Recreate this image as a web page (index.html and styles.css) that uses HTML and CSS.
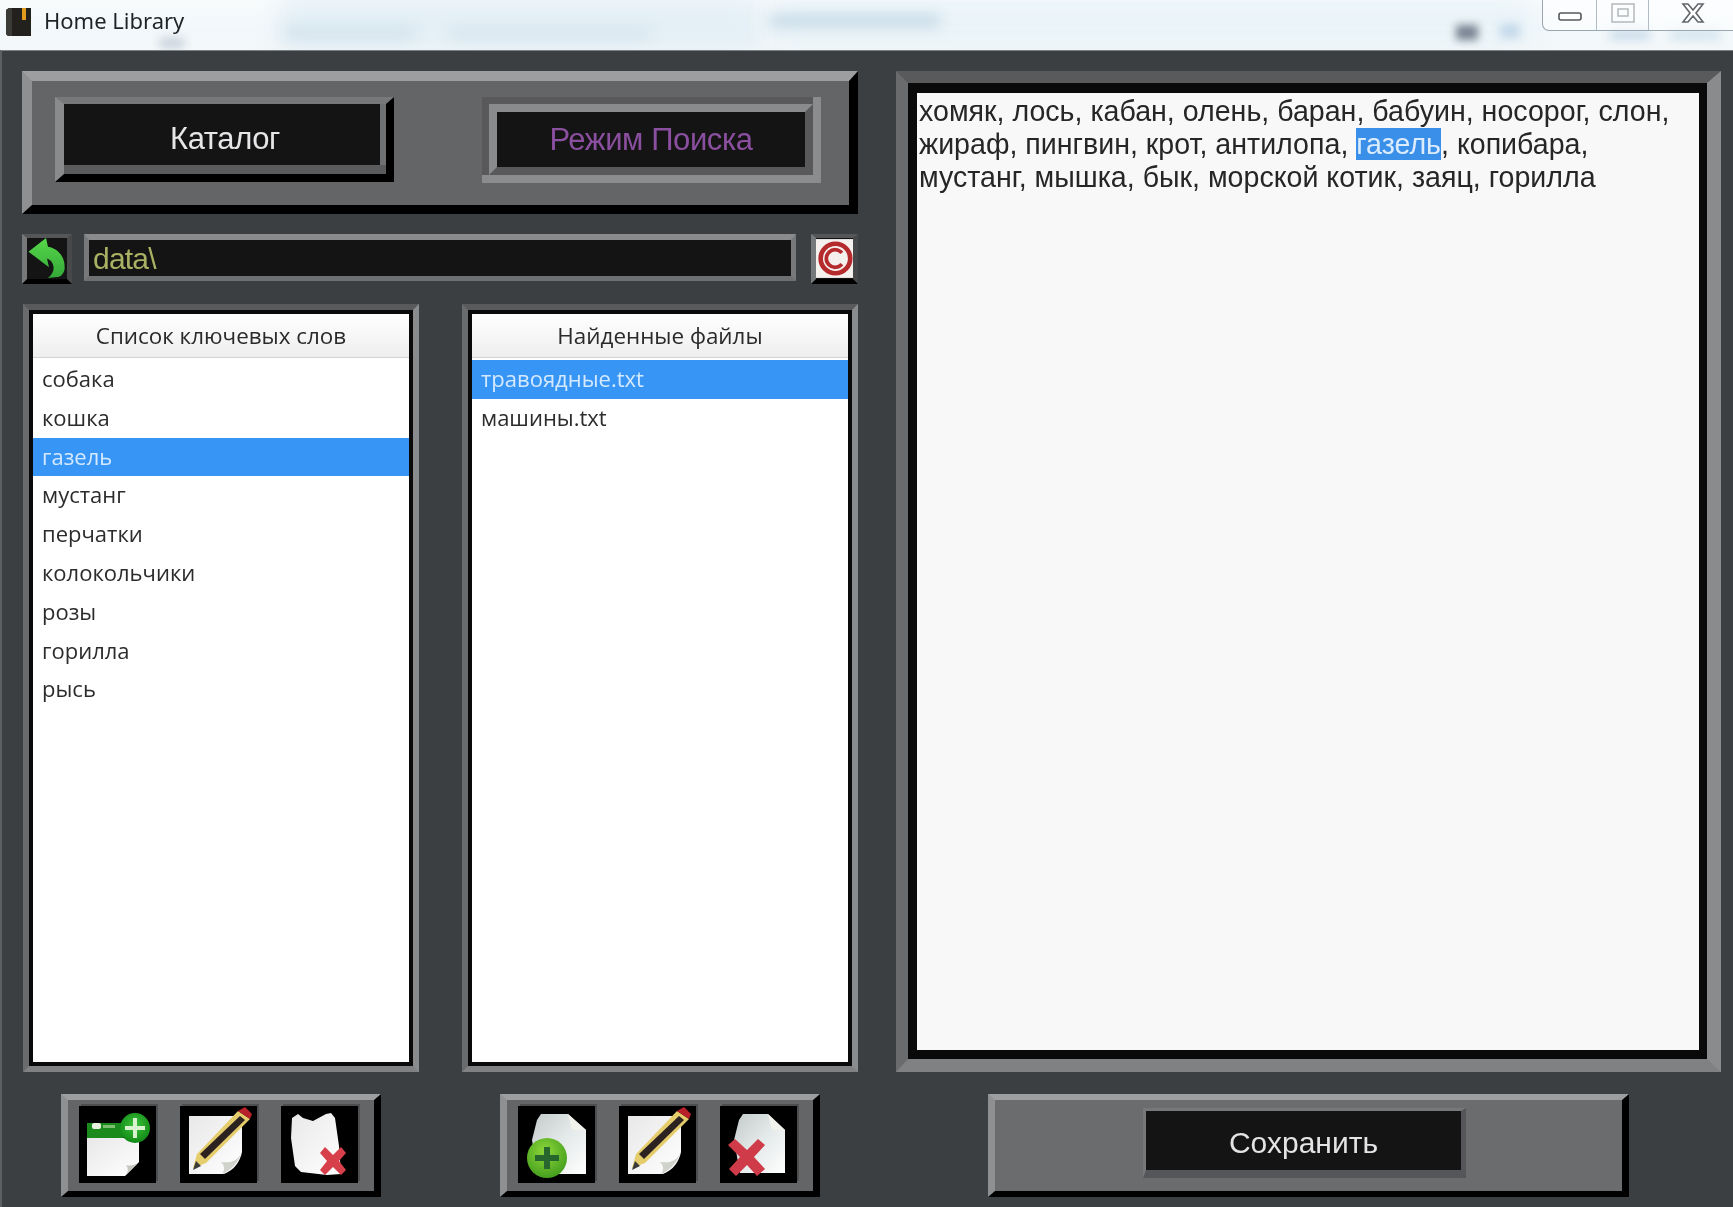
FILE: index.html
```html
<!DOCTYPE html>
<html lang="ru">
<head>
<meta charset="utf-8">
<title>Home Library</title>
<link rel="stylesheet" href="styles.css">
</head>
<body>
<svg class="defs" width="0" height="0" aria-hidden="true">
  <defs>
    <linearGradient id="sheet" x1="0" y1="0" x2="1" y2="1"><stop offset="0" stop-color="#e8e8e8"/><stop offset="1" stop-color="#ffffff"/></linearGradient>
    <linearGradient id="fileg" x1="0" y1="0" x2="1" y2="1"><stop offset="0" stop-color="#c4c9c9"/><stop offset=".5" stop-color="#e4e9e9"/><stop offset="1" stop-color="#ffffff"/></linearGradient>
    <radialGradient id="greenb" cx=".45" cy=".35" r=".7"><stop offset="0" stop-color="#8fd83a"/><stop offset="1" stop-color="#3f9a1c"/></radialGradient>
    <radialGradient id="greenc" cx=".5" cy=".4" r=".7"><stop offset="0" stop-color="#3cc23c"/><stop offset="1" stop-color="#0a800f"/></radialGradient>
    <linearGradient id="arrowg" x1="0" y1="0" x2="0" y2="1"><stop offset="0" stop-color="#57d84a"/><stop offset="1" stop-color="#34a838"/></linearGradient>
    <symbol id="pencil" viewBox="0 0 77 77">
      <path d="M9 10H62V46C60 56 54 64 44 68H9Z" fill="url(#sheet)"/>
      <path d="M61 48C56 56 50 57 41 56C45 60 45 64 42 68C52 64 58 56 61 48Z" fill="#cfd3cb"/>
      <path d="M58 5L70 13L26 57L13 62L17 48Z" fill="#e6cd6c"/>
      <path d="M60 10L65 14L25 53L20 48Z" fill="#2c2320"/>
      <path d="M58 5L65 1L72 8L70 13Z" fill="#b8202a"/>
      <path d="M16 55L21 60L13 64Z" fill="#3a3a3a"/>
    </symbol>
  </defs>
</svg>
<div class="app">
  <header class="titlebar">
    <div class="haze">
      <span class="blot blot-i"></span>
      <span class="blot blot-j"></span>
      <span class="blot blot-a"></span>
      <span class="blot blot-b"></span>
      <span class="blot blot-c"></span>
      <span class="blot blot-d"></span>
      <span class="blot blot-e"></span>
      <span class="blot blot-f"></span>
      <span class="blot blot-g"></span>
      <span class="blot blot-h"></span>
    </div>
    <svg class="app-icon" viewBox="0 0 27 30" aria-hidden="true">
      <path d="M1 3L4 1H26V29H3L1 27Z" fill="#23211e"/>
      <path d="M1 3L4 1H7V29H3L1 27Z" fill="#3a3a36"/>
      <rect x="17" y="1" width="4" height="12" fill="#e29a1c"/>
    </svg>
    <span class="app-name">Home Library</span>
    <div class="win-controls">
      <span class="win-btn win-min"><svg viewBox="0 0 24 10" aria-hidden="true"><rect x="1" y="1" width="22" height="7" rx="2" fill="#fff" stroke="#55595e" stroke-width="1.6"/></svg></span>
      <span class="win-btn win-max"><svg viewBox="0 0 24 20" aria-hidden="true"><rect x="1" y="1" width="22" height="18" fill="none" stroke="#b4b8bb" stroke-width="1.5"/><rect x="7" y="6" width="10" height="7" fill="none" stroke="#b4b8bb" stroke-width="1.5"/></svg></span>
      <span class="win-btn win-close"><svg viewBox="0 0 24 20" aria-hidden="true"><path d="M2 1H7L12 7L17 1H22L15 10L22 19H17L12 13L7 19H2L9 10Z" fill="#fff" stroke="#62666a" stroke-width="1.6"/></svg></span>
    </div>
  </header>

  <main class="main">
    <section class="left">
      <div class="bevel-out top-panel">
        <button class="btn-raised mode-btn">Каталог</button>
        <div class="btn-pressed-wrap"><button class="btn-pressed mode-btn">Режим Поиска</button></div>
      </div>

      <div class="path-row">
        <span class="small-btn back-btn">
          <svg viewBox="0 0 40 42" aria-hidden="true">
            <path d="M1 14L19 0L21 9C32 11 39 20 38 32C37 37 34 40 30 40L21 41C26 37 28 32 26 27C25 24 23 22 20 21L22 30Z" fill="url(#arrowg)"/>
          </svg>
        </span>
        <div class="path-field">data\</div>
        <span class="small-btn copy-btn">
          <svg viewBox="0 0 40 42" aria-hidden="true">
            <rect width="40" height="42" fill="#f4f0ee"/>
            <circle cx="21" cy="21" r="16" fill="none" stroke="#b52a2c" stroke-width="5"/>
            <path d="M28 15A9.5 9.5 0 1 0 28 27" fill="none" stroke="#b52a2c" stroke-width="4"/>
          </svg>
        </span>
      </div>

      <div class="lists">
        <div class="bevel-in list-box">
          <div class="list-head">Список ключевых слов</div>
          <ul class="list">
            <li>собака</li>
            <li>кошка</li>
            <li class="selected">газель</li>
            <li>мустанг</li>
            <li>перчатки</li>
            <li>колокольчики</li>
            <li>розы</li>
            <li>горилла</li>
            <li>рысь</li>
          </ul>
        </div>
        <div class="bevel-in list-box">
          <div class="list-head">Найденные файлы</div>
          <ul class="list">
            <li class="selected">травоядные.txt</li>
            <li>машины.txt</li>
          </ul>
        </div>
      </div>
    </section>

    <section class="bevel-in editor-box">
      <div class="editor">хомяк, лось, кабан, олень, баран, бабуин, носорог, слон, жираф, пингвин, крот, антилопа, <mark class="hit">газель</mark>, копибара, мустанг, мышка, бык, морской котик, заяц, горилла</div>
    </section>

    <section class="tools-row">
      <div class="bevel-out toolbar">
        <span class="icon-btn">
          <svg viewBox="0 0 77 77" aria-hidden="true">
            <path d="M8 32H60V56L46 70H8Z" fill="url(#sheet)"/>
            <path d="M60 56C55 60 51 60 47 59C50 63 49 67 46 70Z" fill="#c4c8c0"/>
            <path d="M8 17H44V32H8Z" fill="#1a8a1c"/>
            <rect x="13" y="17" width="9" height="6" rx="2" fill="#e8f0e0"/>
            <rect x="24" y="19" width="12" height="3" fill="#7dbf70"/>
            <circle cx="56" cy="22" r="15" fill="url(#greenc)"/>
            <path d="M54 12H58V20H66V24H58V32H54V24H46V20H54Z" fill="#d8f2d0"/>
          </svg>
        </span>
        <span class="icon-btn"><svg viewBox="0 0 77 77" aria-hidden="true"><use href="#pencil"/></svg></span>
        <span class="icon-btn">
          <svg viewBox="0 0 77 77" aria-hidden="true">
            <path d="M11 12L17 8L22 12L32 15L45 8L50 7L54 12L58 40L60 68L46 69L20 66L14 60L10 32Z" fill="url(#sheet)"/>
            <path d="M39 47L44 41L52 49L60 41L65 47L58 55L65 64L60 69L52 61L44 69L39 64L46 55Z" fill="#d7404a"/>
          </svg>
        </span>
      </div>

      <div class="bevel-out toolbar">
        <span class="icon-btn">
          <svg viewBox="0 0 77 77" aria-hidden="true">
            <path d="M19 14L23 8H50L68 24V68H20L14 34Z" fill="url(#fileg)"/>
            <path d="M50 8L68 24H54Z" fill="#f2f2ec"/>
            <circle cx="29" cy="52" r="20" fill="url(#greenb)"/>
            <path d="M26 41H32V49H41V55H32V63H26V55H17V49H26Z" fill="#27662c"/>
          </svg>
        </span>
        <span class="icon-btn"><svg viewBox="0 0 77 77" aria-hidden="true"><use href="#pencil"/></svg></span>
        <span class="icon-btn">
          <svg viewBox="0 0 77 77" aria-hidden="true">
            <path d="M19 14L23 8H48L65 24V67H20L14 34Z" fill="url(#fileg)"/>
            <path d="M48 8L65 24H52Z" fill="#f2f2ec"/>
            <path d="M8 39L15 33L27 44L38 33L45 39L34 51L45 63L37 70L27 59L16 70L9 63L20 51Z" fill="#cf3b48"/>
          </svg>
        </span>
      </div>
    </section>

    <section class="bevel-out save-panel">
      <button class="btn-save">Сохранить</button>
    </section>
  </main>
</div>
</body>
</html>
```

FILE: styles.css
```css
* { box-sizing: border-box; }
html, body { margin: 0; padding: 0; background: #3c3f41; }
.defs { position: absolute; }

.app {
  width: 1733px;
  height: 1207px;
  display: flex;
  flex-direction: column;
  overflow: hidden;
  font-family: "Liberation Sans", Arial, sans-serif;
  filter: blur(0.5px);
}

/* Title bar */
.titlebar {
  position: relative;
  height: 50px;
  flex: none;
  display: flex;
  align-items: flex-start;
  overflow: hidden;
  background: linear-gradient(180deg, #f8fbfc 0%, #f1f8fb 60%, #f4f7f8 100%);
}
.haze { position: absolute; inset: 0; }
.blot { position: absolute; display: block; filter: blur(7px); }
.blot-i { left: 280px; top: 0; width: 480px; height: 50px; background: #e3eff6; filter: blur(12px); }
.blot-j { left: 770px; top: 0; width: 760px; height: 46px; background: #e9f3f8; filter: blur(14px); }
.blot-a { left: 285px; top: 27px; width: 130px; height: 12px; background: #d3e2ec; }
.blot-b { left: 450px; top: 28px; width: 200px; height: 12px; background: #d8e6ee; }
.blot-c { left: 770px; top: 15px; width: 170px; height: 12px; background: #c5d8e6; }
.blot-d { left: 1456px; top: 25px; width: 22px; height: 15px; background: #778290; filter: blur(4px); }
.blot-e { left: 1500px; top: 24px; width: 20px; height: 14px; background: #c3d8ea; filter: blur(5px); }
.blot-f { left: 1610px; top: 30px; width: 40px; height: 10px; background: #cbdcea; filter: blur(5px); }
.blot-g { left: 1670px; top: 30px; width: 50px; height: 10px; background: #d5e4ee; filter: blur(5px); }
.blot-h { left: 160px; top: 38px; width: 24px; height: 10px; background: #c6d0da; filter: blur(5px); }

.app-icon { position: relative; width: 27px; height: 30px; margin: 7px 0 0 5px; flex: none; }
.app-name {
  position: relative;
  margin: 5px 0 0 12px;
  font-family: "Noto Sans", "Open Sans", sans-serif;
  font-size: 22px;
  line-height: 30px;
  color: #1e2326;
}
.win-controls {
  position: absolute;
  top: 0;
  right: 0;
  display: flex;
  height: 31px;
  width: 191px;
  border: 1px solid #9aa6b0;
  border-top: 0;
  border-right: 0;
  border-radius: 0 0 0 7px;
  background: rgba(255, 255, 255, .55);
}
.win-btn { display: flex; justify-content: center; flex: none; }
.win-btn svg { display: block; }
.win-min { width: 54px; border-right: 1px solid #b3bcc4; padding-top: 12px; }
.win-min svg { width: 24px; height: 10px; }
.win-max { width: 52px; border-right: 1px solid #b3bcc4; padding-top: 3px; }
.win-max svg { width: 24px; height: 20px; }
.win-close { width: 84px; padding: 3px 0 0 3px; }
.win-close svg { width: 24px; height: 20px; }

/* Main layout */
.main {
  flex: 1;
  display: grid;
  grid-template-columns: 836px 825px;
  grid-template-rows: 1001px 103px;
  column-gap: 38px;
  row-gap: 22px;
  padding: 20px 12px 10px 20px;
  background: #3c3f41;
  border-top: 1px solid #7d8083;
  border-left: 2px solid #5b5f62;
}
.left { display: flex; flex-direction: column; gap: 20px; min-height: 0; }

/* Bevels */
.bevel-out {
  border-style: solid;
  border-width: 9px 9px 9px 10px;
  border-color: #9d9e9f #000 #000 #8f9091;
  background: #646567;
}
.bevel-in {
  border-style: solid;
  border-color: #585a5c #8a8b8c #808182 #6a6b6d;
  border-width: 6px;
  background: #000;
}

/* Top panel */
.top-panel {
  height: 143px;
  display: flex;
  justify-content: space-between;
  padding: 16px 28px 14px 23px;
  border-width: 10px 9px 9px 10px;
}
.mode-btn {
  display: block;
  margin: 0;
  padding: 0;
  font-family: "Liberation Sans", Arial, sans-serif;
  font-size: 31px;
  letter-spacing: -.4px;
  background: #141414;
}
.btn-raised {
  width: 339px;
  height: 85px;
  color: #e6e6e8;
  border-style: solid;
  border-width: 7px 8px 8px 9px;
  border-color: #777879 #000 #000 #8a8b8c;
  box-shadow: inset 0 -9px 0 #5a5b5c, inset -6px 0 0 #6f7071;
}
.btn-pressed-wrap {
  width: 339px;
  height: 86px;
  padding: 7px 8px 8px 7px;
  background: #59595b;
  box-shadow: inset 0 -8px 0 #8b8c8d, inset -8px 0 0 #8b8c8d;
}
.btn-pressed {
  width: 324px;
  height: 71px;
  color: #8b4fa0;
  border-style: solid;
  border-width: 8px;
  border-color: #8a8b8c #59595b #59595b #8a8b8c;
}

/* Path row */
.path-row { height: 50px; display: flex; align-items: flex-start; }
.small-btn {
  display: block;
  width: 50px;
  height: 50px;
  flex: none;
  background: #141414;
  border-style: solid;
  border-width: 4px 5px 5px 5px;
  border-color: #555658 #46484a #000 #777879;
}
.small-btn svg { display: block; width: 100%; height: 100%; }
.back-btn { margin-right: 12px; }
.copy-btn { margin-left: 15px; width: 47px; }
.path-field {
  width: 712px;
  height: 47px;
  padding: 0 4px;
  border-style: solid;
  border-width: 6px 5px 5px 5px;
  border-color: #8a8b8c #77787a #6e6f70 #77787a;
  background: #141414;
  color: #a9b163;
  font-size: 30px;
  line-height: 37px;
  letter-spacing: -.8px;
}

/* Lists */
.lists {
  flex: 1;
  min-height: 0;
  display: grid;
  grid-template-columns: 396px 396px;
  column-gap: 43px;
  padding-left: 1px;
}
.list-box {
  display: flex;
  flex-direction: column;
  background: #fff;
  border-width: 6px;
  box-shadow: inset 0 0 0 4px #0a0a0a;
  padding: 4px;
}
.list-head {
  height: 44px;
  flex: none;
  background: linear-gradient(180deg, #ffffff, #eeeeee);
  border-bottom: 1px solid #d2d2d2;
  text-align: center;
  font-family: "Open Sans", "Noto Sans", sans-serif;
  font-size: 22.4px;
  line-height: 44px;
  color: #2a2a2a;
}
.list { list-style: none; margin: 2px 0 0; padding: 0; flex: 1; background: #fff; }
.list li {
  height: 38.8px;
  padding-left: 9px;
  font-family: "Open Sans", "Noto Sans", sans-serif;
  font-size: 22px;
  line-height: 37px;
  color: #2c2c2c;
}
.list li.selected { background: #3796f5; color: #d4e9ff; }

/* Editor */
.editor-box {
  border-width: 12px 14px 13px 12px;
  padding: 10px 8px 9px 9px;
  background: #0a0a0a;
  display: flex;
}
.editor {
  flex: 1;
  background: #f8f8f8;
  padding: 2px 10px 0 2px;
  font-size: 28.6px;
  line-height: 33px;
  color: #262626;
}
.hit { background: #3a8fe8; color: #dcecff; }

/* Bottom row */
.tools-row { display: flex; gap: 119px; padding-left: 39px; }
.toolbar {
  width: 320px;
  display: flex;
  gap: 24px;
  padding: 6px 16px 8px 11px;
  border-width: 6px 7px 6px 7px;
}
.icon-btn {
  display: block;
  width: 77px;
  height: 77px;
  flex: none;
  background: #000;
  box-shadow: 2px -2px 0 #4d4e50;
}
.icon-btn svg { display: block; width: 77px; height: 77px; }

.save-panel {
  width: 641px;
  margin-left: 92px;
  display: flex;
  align-items: flex-start;
  justify-content: center;
  padding-top: 8px;
  border-width: 6px 7px 6px 7px;
  background: #6b6c6e;
}
.btn-save {
  display: block;
  width: 323px;
  height: 70px;
  margin: 0 8px 0 0;
  padding: 4px 0 0;
  background: #141414;
  color: #e4e4e6;
  font-family: "Liberation Sans", Arial, sans-serif;
  font-size: 30px;
  letter-spacing: 0;
  border-style: solid;
  border-width: 3px 5px 8px 3px;
  border-color: #77787a #55565a #55565a #77787a;
}
```
